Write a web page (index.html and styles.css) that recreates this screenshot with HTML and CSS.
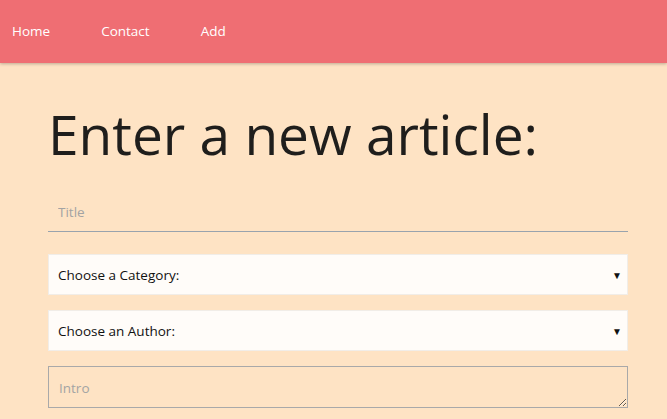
FILE: index.html
```html
<!DOCTYPE html>
<html>
<head>
<meta charset="utf-8">
<link rel="stylesheet" href="styles.css">
</head>
<body>
<nav class="navbar">
  <a class="nav-link" href="#">Home</a>
  <a class="nav-link" href="#">Contact</a>
  <a class="nav-link" href="#">Add</a>
</nav>
<main class="content">
  <h1 class="title">Enter a new article:</h1>
  <form class="form">
    <input class="text-input" type="text" placeholder="Title">
    <div class="select">
      <span>Choose a Category:</span>
      <span class="arrow">&#9660;</span>
    </div>
    <div class="select">
      <span>Choose an Author:</span>
      <span class="arrow">&#9660;</span>
    </div>
    <textarea class="textarea" placeholder="Intro"></textarea>
  </form>
</main>
</body>
</html>
```

FILE: styles.css
```css
* { box-sizing: border-box; }
html, body { margin: 0; padding: 0; }
body {
  background: #fee3c4;
  font-family: "Open Sans", "Noto Sans", sans-serif;
  overflow: hidden;
  height: 419px;
}
.navbar {
  height: 63px;
  background: #ef6e73;
  display: flex;
  align-items: center;
  padding-left: 12px;
  gap: 51px;
  box-shadow: 0 1px 3px rgba(0,0,0,0.25);
}
.nav-link {
  color: #fff;
  text-decoration: none;
  font-size: 13.5px;
  line-height: 1;
  padding-top: 1px;
}
.content {
  padding: 0 39px 0 48px;
}
.title {
  font-weight: 400;
  font-size: 55px;
  line-height: 1;
  margin: 43px 0 0 0;
  color: #1f1e1c;
}
.form {
  display: flex;
  flex-direction: column;
  margin-top: 27px;
}
.text-input {
  border: none;
  border-bottom: 1px solid #99a3ad;
  background: transparent;
  height: 44px;
  padding: 4px 10px 0 10px;
  font-family: inherit;
  font-size: 13.5px;
  outline: none;
}
.text-input::placeholder, .textarea::placeholder { color: #a3a3a3; }
.select {
  margin-top: 22px;
  height: 41px;
  background: #fffcf9;
  border: 1px solid #f1ede8;
  display: flex;
  align-items: center;
  justify-content: space-between;
  padding: 0 5px 0 9px;
  font-size: 13.5px;
  color: #111;
}
.select + .select { margin-top: 15px; }
.arrow { font-size: 10px; color: #111; }
.textarea {
  margin-top: 15px;
  height: 42px;
  border: 1px solid #a9a9a9;
  background: transparent;
  font-family: inherit;
  font-size: 13.5px;
  padding: 12px 10px;
  resize: vertical;
}
```
